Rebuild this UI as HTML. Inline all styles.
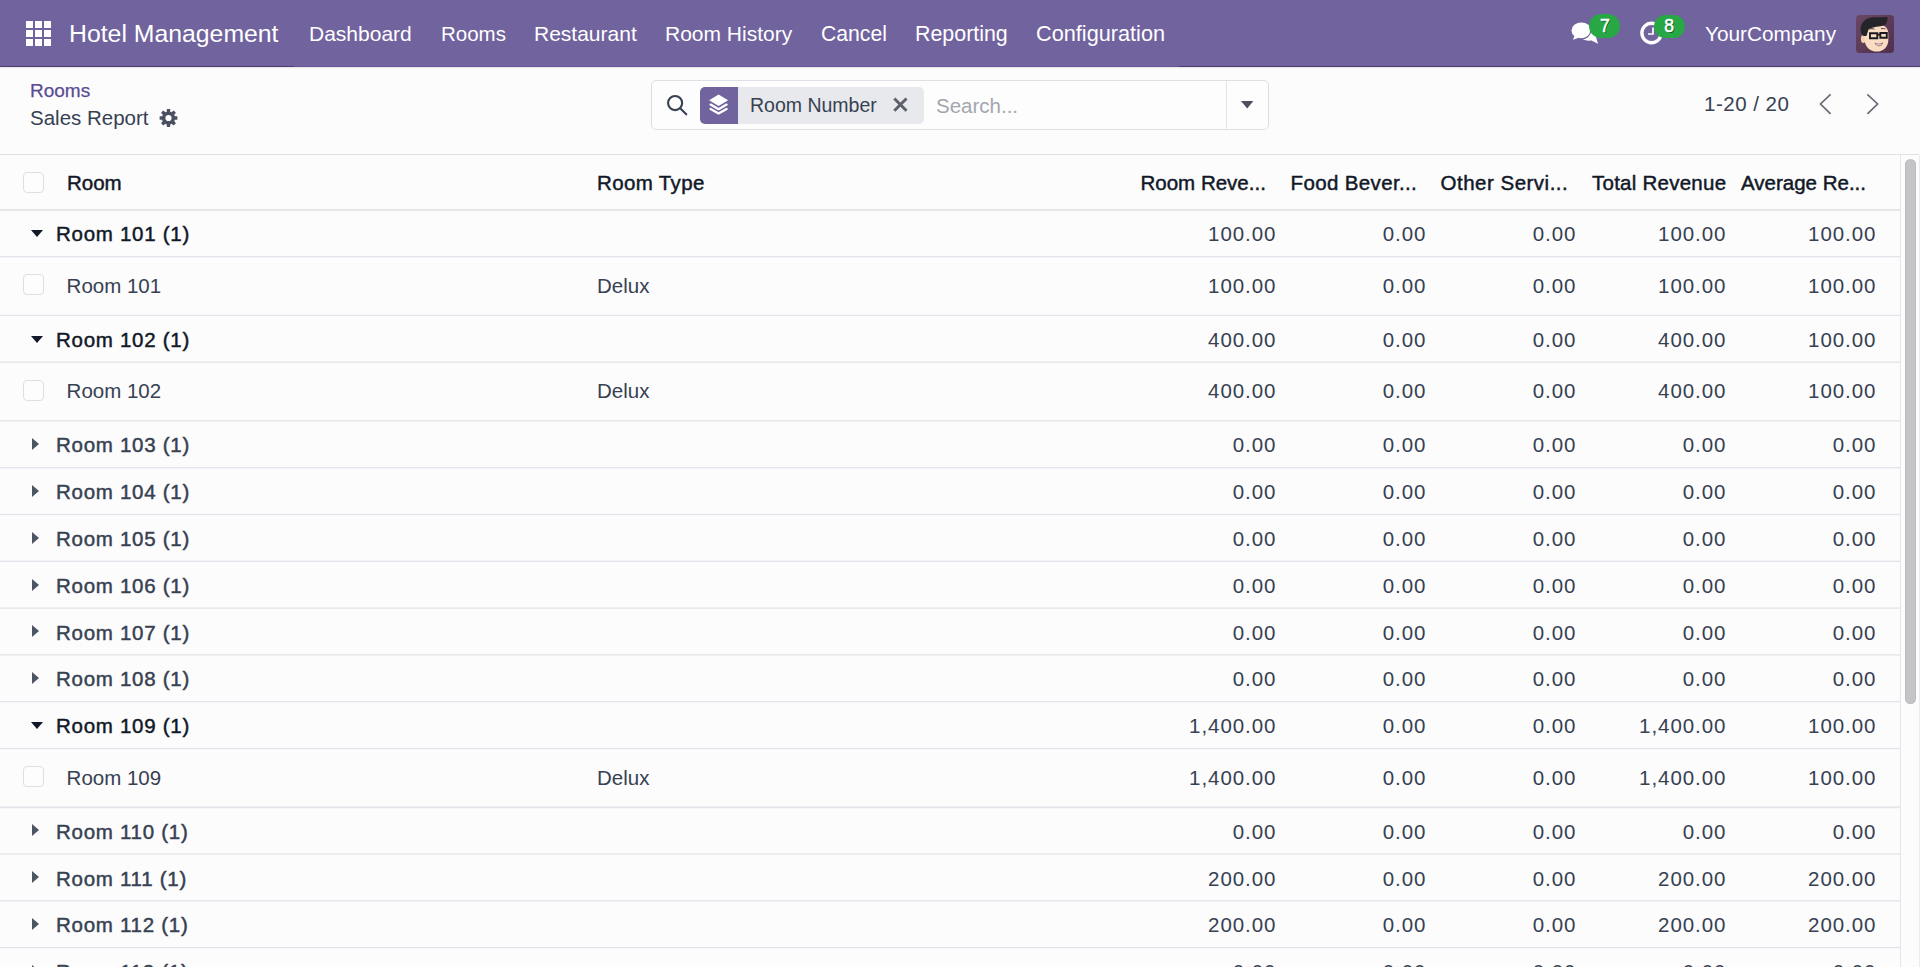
<!DOCTYPE html>
<html><head><meta charset="utf-8">
<style>
html,body{margin:0;padding:0;}
body{width:1920px;height:967px;overflow:hidden;position:relative;background:#fcfcfd;font-family:"Liberation Sans", sans-serif;color:#374151;}
.nav{position:absolute;left:0;top:0;width:1920px;height:67.3px;background:#71639e;box-shadow:0 1px 1.5px rgba(0,0,0,0.10);}
.nb{position:absolute;top:66px;height:1.3px;}
.nav .t{color:#fff;}
.t{position:absolute;white-space:nowrap;line-height:0;margin-top:-0.3465em;}
/* t: top = baseline (line-height 0 => baseline at top + ascent-ish offset corrected below) */
.ln{position:absolute;left:0;width:1900px;background:#e5e7eb;}
.cb{position:absolute;left:23px;width:19px;height:19px;border:1px solid #dcdfe4;border-radius:4px;background:#fdfdfe;}
.caret{position:absolute;left:31px;fill:#111827;}
.g .caret{fill:#4b5563;}
.g.open .caret{fill:#111827;}
.glabel{left:56px;font-size:20.5px;color:#374151;-webkit-text-stroke:0.45px #374151;letter-spacing:0.72px;}
.g.open .glabel{color:#111827;-webkit-text-stroke-color:#111827;}
.rlabel{left:66.6px;font-size:20.5px;color:#374151;}
.rtype{left:597px;font-size:20.5px;color:#374151;}
.num{font-size:20.5px;color:#374151;letter-spacing:0.95px;margin-right:-0.95px;}
.hd{font-size:20.5px;color:#111827;-webkit-text-stroke:0.45px #111827;}
.badge{font-size:17.5px;color:#fff;-webkit-text-stroke:0.5px #fff;text-shadow:1px 1px 0 #0b5d1e;}
.sb{position:absolute;left:1900px;top:154.5px;width:19px;height:813px;border-left:1px solid #e5e7eb;background:#fcfcfd;}
.thumb{position:absolute;left:1905px;top:159px;width:11px;height:545px;border-radius:6px;background:#c3c3c8;box-shadow:inset 0 0 0 0.6px rgba(0,0,0,0.07);}
</style></head><body>
<div class="nav">
  <div class="nb" style="left:0;width:294px;background:#4a3e72"></div><div class="nb" style="left:294px;width:885px;background:#66559a"></div><div class="nb" style="left:1179px;width:741px;background:#4a3e72"></div>
  <svg style="position:absolute;left:26px;top:21px" width="25" height="25" viewBox="0 0 25 25" fill="#fff">
    <rect x="0" y="0" width="7" height="7"/><rect x="9" y="0" width="7" height="7"/><rect x="18" y="0" width="7" height="7"/>
    <rect x="0" y="9" width="7" height="7"/><rect x="9" y="9" width="7" height="7"/><rect x="18" y="9" width="7" height="7"/>
    <rect x="0" y="18" width="7" height="7"/><rect x="9" y="18" width="7" height="7"/><rect x="18" y="18" width="7" height="7"/>
  </svg>
  <span class="t" style="left:69px;top:43px;font-size:24.8px">Hotel Management</span>
  <span class="t" style="left:309px;top:41.3px;font-size:21px">Dashboard</span>
  <span class="t" style="left:441px;top:41.3px;font-size:20.5px">Rooms</span>
  <span class="t" style="left:534px;top:41.3px;font-size:21px">Restaurant</span>
  <span class="t" style="left:665px;top:41.3px;font-size:21px">Room History</span>
  <span class="t" style="left:821px;top:41.3px;font-size:21.2px">Cancel</span>
  <span class="t" style="left:915px;top:41.3px;font-size:21.4px">Reporting</span>
  <span class="t" style="left:1036px;top:41.3px;font-size:21.7px">Configuration</span>
  <span class="t" style="left:1705px;top:41.1px;font-size:20.8px">YourCompany</span>

  <!-- chat icon -->
  <svg style="position:absolute;left:1568px;top:18px" width="34" height="30" viewBox="1568 18 34 30" fill="#fff">
    <path d="M1589.5 30.5C1589.5 27.2 1591 24.5 1596.5 28.5C1598.5 31 1598.5 34.5 1596 37L1598 43.8L1591.5 40.5C1587 41 1583.5 40 1581.5 38.5C1586 38.5 1589.5 35 1589.5 30.5Z"/>
    <ellipse cx="1581.4" cy="30.4" rx="9.9" ry="7.9"/>
    <path d="M1574.5 35.5L1573 39.8L1579.5 37.5Z"/>
    <path d="M1581.5 38.9C1585.8 38.9 1590.5 36 1590.8 31" fill="none" stroke="#71639e" stroke-width="1.2"/>
  </svg>
  <!-- clock icon -->
  <svg style="position:absolute;left:1636px;top:17px" width="32" height="32" viewBox="1636 17 32 32">
    <circle cx="1651.6" cy="33" r="9.7" fill="none" stroke="#fff" stroke-width="3.4"/>
    <path d="M1653 27.4V34H1648" fill="none" stroke="#fff" stroke-width="1.7"/>
  </svg>
  <div style="position:absolute;left:1589px;top:14px;width:31px;height:23.7px;border-radius:12px;background:#28a745"></div>
  <div style="position:absolute;left:1654px;top:14.8px;width:31px;height:23.5px;border-radius:12px;background:#28a745"></div>
  <span class="t badge" style="left:1600px;top:32.3px">7</span>
  <span class="t badge" style="left:1664.3px;top:32.3px">8</span>
  <!-- avatar -->
  <svg style="position:absolute;left:1856px;top:14.7px" width="38" height="38" viewBox="0 0 38 38">
    <defs><linearGradient id="av" x1="0" y1="0" x2="1" y2="1"><stop offset="0" stop-color="#6a4764"/><stop offset="1" stop-color="#50304a"/></linearGradient>
    <clipPath id="avc"><rect width="38" height="38" rx="3.5"/></clipPath></defs>
    <g clip-path="url(#avc)">
    <rect width="38" height="38" fill="url(#av)"/>
    <ellipse cx="7.3" cy="24" rx="2.4" ry="4" fill="#f3cfae"/>
    <path d="M8.2 16C8.5 11 13 9 20 9C27.5 9 32.3 12 32.3 19V25C32.3 32 27 36.6 21 36.6C14 36.6 9 32 8.6 25Z" fill="#f9dcc2"/>
    <path d="M4.6 15C4.6 7 10 2.5 18 2.3C24 2.1 29 2.5 31.2 1.8C32 4.5 31 8.5 28.5 10.3C24 12 17 11.5 12.5 14.5L10.5 21H7.5C5.5 19.5 4.6 17.5 4.6 15Z" fill="#252529"/>
    <path d="M13.5 14.2C15 13.5 17 13.5 18.5 14.2M25 13.8C26.5 13.3 28 13.4 29.5 14" fill="none" stroke="#3a2a2a" stroke-width="0.9"/>
    <path d="M14 18.3H21.3V23.3H14Z M24.3 18H30.8V22.8H24.3Z M21.3 19.6H24.3" fill="none" stroke="#1b1b1f" stroke-width="1.9"/>
    <path d="M19 28C21.2 29.5 24.5 29.5 26.8 27.8C26 30.2 24.5 30.8 22.8 30.8C21 30.8 19.6 30 19 28Z" fill="#f4f4f4" stroke="#8b4b50" stroke-width="0.7"/>
    </g>
  </svg>
</div>
<div class="cp">
  <span class="t" style="left:30px;top:97.9px;font-size:19px;color:#5b4c95;-webkit-text-stroke:0.25px #5b4c95">Rooms</span>
  <span class="t" style="left:30px;top:125.5px;font-size:20.5px;color:#374151">Sales Report</span>
  <span class="t" style="left:1704px;top:111.2px;font-size:20.5px;letter-spacing:0.5px;color:#374151">1-20 / 20</span>
  <div style="position:absolute;left:651px;top:80px;width:616px;height:48px;border:1px solid #dcdfe3;border-radius:5px;background:#fdfdfe"></div>
  <div style="position:absolute;left:1226px;top:81px;width:1px;height:48px;background:#e3e5e9"></div>
  <div style="position:absolute;left:699.5px;top:87px;width:38.5px;height:36.5px;background:#71639e;border-radius:5px 0 0 5px"></div>
  <div style="position:absolute;left:738px;top:87px;width:185.5px;height:36.5px;background:#e7e9ed;border-radius:0 5px 5px 0"></div>
  <span class="t" style="left:750px;top:111.7px;font-size:19.5px;color:#374151">Room Number</span>
  <span class="t" style="left:936px;top:112.7px;font-size:20.5px;color:#a3a6ad">Search...</span>
</div>

  <!-- search icon -->
  <svg style="position:absolute;left:660px;top:88px" width="34" height="34" viewBox="660 88 34 34" fill="none" stroke="#374151" stroke-width="2.1">
    <circle cx="675.1" cy="103.1" r="7.05"/>
    <path d="M680.4 108.4L686.3 114.3" stroke-linecap="round"/>
  </svg>
  <!-- layers icon -->
  <svg style="position:absolute;left:705px;top:90px" width="28" height="28" viewBox="705 90 28 28">
    <path d="M718.6 94.6L728.1 100.3L718.6 106L709.1 100.3Z" fill="#fff"/>
    <path d="M710.6 104.6L718.6 109.2L726.6 104.6" fill="none" stroke="#fff" stroke-width="2.3" stroke-linejoin="round" stroke-linecap="round"/>
    <path d="M710.6 108.9L718.6 113.4L726.6 108.9" fill="none" stroke="#fff" stroke-width="2.3" stroke-linejoin="round" stroke-linecap="round"/>
  </svg>
  <!-- close x -->
  <svg style="position:absolute;left:888px;top:92px" width="25" height="25" viewBox="888 92 25 25" stroke="#5b606b" stroke-width="2.9">
    <path d="M894.3 98.4L906.5 110.7M906.5 98.4L894.3 110.7"/>
  </svg>
  <!-- dropdown caret -->
  <svg style="position:absolute;left:1238px;top:98px" width="18" height="14" viewBox="1238 98 18 14">
    <path d="M1241 101H1253.4L1247.2 108.4Z" fill="#4b5060"/>
  </svg>
  <!-- gear -->
  <svg style="position:absolute;left:156px;top:106px" width="25" height="24" viewBox="-12.5 -12 25 24">
    <g fill="#4b5060">
      <circle r="6.6"/>
      <rect x="-1.7" y="-8.9" width="3.4" height="17.8" rx="0.5"/>
      <rect x="-1.7" y="-8.9" width="3.4" height="17.8" rx="0.5" transform="rotate(45)"/>
      <rect x="-1.7" y="-8.9" width="3.4" height="17.8" rx="0.5" transform="rotate(90)"/>
      <rect x="-1.7" y="-8.9" width="3.4" height="17.8" rx="0.5" transform="rotate(135)"/>
    </g>
    <circle r="3.1" fill="#fff"/>
  </svg>
  <!-- pager chevrons -->
  <svg style="position:absolute;left:1810px;top:88px" width="80" height="32" viewBox="1810 88 80 32" fill="none" stroke="#656974" stroke-width="1.7" stroke-linecap="square">
    <path d="M1830 95L1820.5 104L1830 113.2"/>
    <path d="M1868 95L1877.6 104L1868 113.2"/>
  </svg>
<div class="hdr">
  
  <div class="cb" style="top:172px"></div>
  <span class="t hd" style="left:67px;top:190px">Room</span>
  <span class="t hd" style="left:597px;top:190px;letter-spacing:0.37px">Room Type</span>
  <span class="t hd" style="left:1140.5px;top:190px">Room Reve...</span>
  <span class="t hd" style="left:1290.5px;top:190px;letter-spacing:0.36px">Food Bever...</span>
  <span class="t hd" style="left:1440.5px;top:190px;letter-spacing:0.5px">Other Servi...</span>
  <span class="t hd" style="left:1592px;top:190px;letter-spacing:0.25px">Total Revenue</span>
  <span class="t hd" style="left:1741px;top:190px">Average Re...</span>
</div>
<svg style="position:absolute;left:0;top:0" width="1920" height="967" viewBox="0 0 1920 967" shape-rendering="geometricPrecision">
<rect x="0" y="154" width="1919" height="1" fill="#dfe2e6"/>
<rect x="0" y="208.90" width="1900" height="2" fill="#e4e6ea"/>
<rect x="0" y="256.03" width="1900" height="1.333" fill="#e1e4e8"/>
<rect x="0" y="314.73" width="1900" height="1.333" fill="#e1e4e8"/>
<rect x="0" y="361.53" width="1900" height="1.333" fill="#e1e4e8"/>
<rect x="0" y="420.23" width="1900" height="1.333" fill="#e1e4e8"/>
<rect x="0" y="467.03" width="1900" height="1.333" fill="#e1e4e8"/>
<rect x="0" y="513.83" width="1900" height="1.333" fill="#e1e4e8"/>
<rect x="0" y="560.63" width="1900" height="1.333" fill="#e1e4e8"/>
<rect x="0" y="607.43" width="1900" height="1.333" fill="#e1e4e8"/>
<rect x="0" y="654.23" width="1900" height="1.333" fill="#e1e4e8"/>
<rect x="0" y="701.03" width="1900" height="1.333" fill="#e1e4e8"/>
<rect x="0" y="747.83" width="1900" height="1.333" fill="#e1e4e8"/>
<rect x="0" y="806.20" width="1900" height="2" fill="#e4e6ea"/>
<rect x="0" y="853.33" width="1900" height="1.333" fill="#e1e4e8"/>
<rect x="0" y="900.13" width="1900" height="1.333" fill="#e1e4e8"/>
<rect x="0" y="946.93" width="1900" height="1.333" fill="#e1e4e8"/>
</svg>
<div class="g open"><svg class="caret" style="top:230.3px" width="12" height="7" viewBox="0 0 12 7"><path d="M0 0H12L6 7Z"/></svg><span class="t glabel" style="top:241.50px">Room 101 (1)</span>
<span class="t num" style="top:241.50px;right:644.5px">100.00</span>
<span class="t num" style="top:241.50px;right:494.5px">0.00</span>
<span class="t num" style="top:241.50px;right:344.5px">0.00</span>
<span class="t num" style="top:241.50px;right:194.5px">100.00</span>
<span class="t num" style="top:241.50px;right:44.5px">100.00</span>
</div>
<div class="r"><div class="cb" style="top:274.3px"></div><span class="t rlabel" style="top:292.80px">Room 101</span><span class="t rtype" style="top:292.80px">Delux</span>
<span class="t num" style="top:292.80px;right:644.5px">100.00</span>
<span class="t num" style="top:292.80px;right:494.5px">0.00</span>
<span class="t num" style="top:292.80px;right:344.5px">0.00</span>
<span class="t num" style="top:292.80px;right:194.5px">100.00</span>
<span class="t num" style="top:292.80px;right:44.5px">100.00</span>
</div>
<div class="g open"><svg class="caret" style="top:335.8px" width="12" height="7" viewBox="0 0 12 7"><path d="M0 0H12L6 7Z"/></svg><span class="t glabel" style="top:347.00px">Room 102 (1)</span>
<span class="t num" style="top:347.00px;right:644.5px">400.00</span>
<span class="t num" style="top:347.00px;right:494.5px">0.00</span>
<span class="t num" style="top:347.00px;right:344.5px">0.00</span>
<span class="t num" style="top:347.00px;right:194.5px">400.00</span>
<span class="t num" style="top:347.00px;right:44.5px">100.00</span>
</div>
<div class="r"><div class="cb" style="top:379.8px"></div><span class="t rlabel" style="top:398.30px">Room 102</span><span class="t rtype" style="top:398.30px">Delux</span>
<span class="t num" style="top:398.30px;right:644.5px">400.00</span>
<span class="t num" style="top:398.30px;right:494.5px">0.00</span>
<span class="t num" style="top:398.30px;right:344.5px">0.00</span>
<span class="t num" style="top:398.30px;right:194.5px">400.00</span>
<span class="t num" style="top:398.30px;right:44.5px">100.00</span>
</div>
<div class="g"><svg class="caret" style="top:438.1px;left:32.3px" width="7" height="12" viewBox="0 0 7 12"><path d="M0 0L7 6L0 12Z"/></svg><span class="t glabel" style="top:452.50px">Room 103 (1)</span>
<span class="t num" style="top:452.50px;right:644.5px">0.00</span>
<span class="t num" style="top:452.50px;right:494.5px">0.00</span>
<span class="t num" style="top:452.50px;right:344.5px">0.00</span>
<span class="t num" style="top:452.50px;right:194.5px">0.00</span>
<span class="t num" style="top:452.50px;right:44.5px">0.00</span>
</div>
<div class="g"><svg class="caret" style="top:484.9px;left:32.3px" width="7" height="12" viewBox="0 0 7 12"><path d="M0 0L7 6L0 12Z"/></svg><span class="t glabel" style="top:499.30px">Room 104 (1)</span>
<span class="t num" style="top:499.30px;right:644.5px">0.00</span>
<span class="t num" style="top:499.30px;right:494.5px">0.00</span>
<span class="t num" style="top:499.30px;right:344.5px">0.00</span>
<span class="t num" style="top:499.30px;right:194.5px">0.00</span>
<span class="t num" style="top:499.30px;right:44.5px">0.00</span>
</div>
<div class="g"><svg class="caret" style="top:531.7px;left:32.3px" width="7" height="12" viewBox="0 0 7 12"><path d="M0 0L7 6L0 12Z"/></svg><span class="t glabel" style="top:546.10px">Room 105 (1)</span>
<span class="t num" style="top:546.10px;right:644.5px">0.00</span>
<span class="t num" style="top:546.10px;right:494.5px">0.00</span>
<span class="t num" style="top:546.10px;right:344.5px">0.00</span>
<span class="t num" style="top:546.10px;right:194.5px">0.00</span>
<span class="t num" style="top:546.10px;right:44.5px">0.00</span>
</div>
<div class="g"><svg class="caret" style="top:578.5px;left:32.3px" width="7" height="12" viewBox="0 0 7 12"><path d="M0 0L7 6L0 12Z"/></svg><span class="t glabel" style="top:592.90px">Room 106 (1)</span>
<span class="t num" style="top:592.90px;right:644.5px">0.00</span>
<span class="t num" style="top:592.90px;right:494.5px">0.00</span>
<span class="t num" style="top:592.90px;right:344.5px">0.00</span>
<span class="t num" style="top:592.90px;right:194.5px">0.00</span>
<span class="t num" style="top:592.90px;right:44.5px">0.00</span>
</div>
<div class="g"><svg class="caret" style="top:625.3px;left:32.3px" width="7" height="12" viewBox="0 0 7 12"><path d="M0 0L7 6L0 12Z"/></svg><span class="t glabel" style="top:639.70px">Room 107 (1)</span>
<span class="t num" style="top:639.70px;right:644.5px">0.00</span>
<span class="t num" style="top:639.70px;right:494.5px">0.00</span>
<span class="t num" style="top:639.70px;right:344.5px">0.00</span>
<span class="t num" style="top:639.70px;right:194.5px">0.00</span>
<span class="t num" style="top:639.70px;right:44.5px">0.00</span>
</div>
<div class="g"><svg class="caret" style="top:672.1px;left:32.3px" width="7" height="12" viewBox="0 0 7 12"><path d="M0 0L7 6L0 12Z"/></svg><span class="t glabel" style="top:686.50px">Room 108 (1)</span>
<span class="t num" style="top:686.50px;right:644.5px">0.00</span>
<span class="t num" style="top:686.50px;right:494.5px">0.00</span>
<span class="t num" style="top:686.50px;right:344.5px">0.00</span>
<span class="t num" style="top:686.50px;right:194.5px">0.00</span>
<span class="t num" style="top:686.50px;right:44.5px">0.00</span>
</div>
<div class="g open"><svg class="caret" style="top:722.1px" width="12" height="7" viewBox="0 0 12 7"><path d="M0 0H12L6 7Z"/></svg><span class="t glabel" style="top:733.30px">Room 109 (1)</span>
<span class="t num" style="top:733.30px;right:644.5px">1,400.00</span>
<span class="t num" style="top:733.30px;right:494.5px">0.00</span>
<span class="t num" style="top:733.30px;right:344.5px">0.00</span>
<span class="t num" style="top:733.30px;right:194.5px">1,400.00</span>
<span class="t num" style="top:733.30px;right:44.5px">100.00</span>
</div>
<div class="r"><div class="cb" style="top:766.1px"></div><span class="t rlabel" style="top:784.60px">Room 109</span><span class="t rtype" style="top:784.60px">Delux</span>
<span class="t num" style="top:784.60px;right:644.5px">1,400.00</span>
<span class="t num" style="top:784.60px;right:494.5px">0.00</span>
<span class="t num" style="top:784.60px;right:344.5px">0.00</span>
<span class="t num" style="top:784.60px;right:194.5px">1,400.00</span>
<span class="t num" style="top:784.60px;right:44.5px">100.00</span>
</div>
<div class="g"><svg class="caret" style="top:824.4px;left:32.3px" width="7" height="12" viewBox="0 0 7 12"><path d="M0 0L7 6L0 12Z"/></svg><span class="t glabel" style="top:838.80px">Room 110 (1)</span>
<span class="t num" style="top:838.80px;right:644.5px">0.00</span>
<span class="t num" style="top:838.80px;right:494.5px">0.00</span>
<span class="t num" style="top:838.80px;right:344.5px">0.00</span>
<span class="t num" style="top:838.80px;right:194.5px">0.00</span>
<span class="t num" style="top:838.80px;right:44.5px">0.00</span>
</div>
<div class="g"><svg class="caret" style="top:871.2px;left:32.3px" width="7" height="12" viewBox="0 0 7 12"><path d="M0 0L7 6L0 12Z"/></svg><span class="t glabel" style="top:885.60px">Room 111 (1)</span>
<span class="t num" style="top:885.60px;right:644.5px">200.00</span>
<span class="t num" style="top:885.60px;right:494.5px">0.00</span>
<span class="t num" style="top:885.60px;right:344.5px">0.00</span>
<span class="t num" style="top:885.60px;right:194.5px">200.00</span>
<span class="t num" style="top:885.60px;right:44.5px">200.00</span>
</div>
<div class="g"><svg class="caret" style="top:918.0px;left:32.3px" width="7" height="12" viewBox="0 0 7 12"><path d="M0 0L7 6L0 12Z"/></svg><span class="t glabel" style="top:932.40px">Room 112 (1)</span>
<span class="t num" style="top:932.40px;right:644.5px">200.00</span>
<span class="t num" style="top:932.40px;right:494.5px">0.00</span>
<span class="t num" style="top:932.40px;right:344.5px">0.00</span>
<span class="t num" style="top:932.40px;right:194.5px">200.00</span>
<span class="t num" style="top:932.40px;right:44.5px">200.00</span>
</div>
<div class="g"><svg class="caret" style="top:964.8px;left:32.3px" width="7" height="12" viewBox="0 0 7 12"><path d="M0 0L7 6L0 12Z"/></svg><span class="t glabel" style="top:979.20px">Room 113 (1)</span>
<span class="t num" style="top:979.20px;right:644.5px">0.00</span>
<span class="t num" style="top:979.20px;right:494.5px">0.00</span>
<span class="t num" style="top:979.20px;right:344.5px">0.00</span>
<span class="t num" style="top:979.20px;right:194.5px">0.00</span>
<span class="t num" style="top:979.20px;right:44.5px">0.00</span>
</div>
<div class="sb"></div>
<div class="thumb"></div>
<div style="position:absolute;left:1919px;top:155px;width:1px;height:812px;background:#e9ebee"></div>
</body></html>
